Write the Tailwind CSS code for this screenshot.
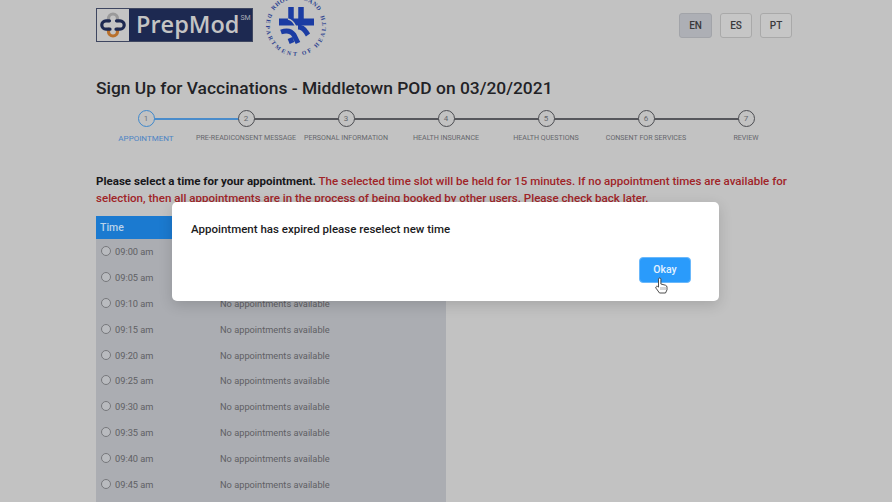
<!DOCTYPE html>
<html lang="en">
<head>
  <meta charset="UTF-8">
  <title>Sign Up for Vaccinations</title>
  <script src="https://cdn.jsdelivr.net/npm/@tailwindcss/browser@4"></script>
</head>
<body class="relative w-[892px] h-[502px] overflow-hidden bg-[#c2c2c2] font-['Roboto',sans-serif] text-[#1c1c1e]">
  <div class="w-[700px] ml-[96px]">
    <!-- Header -->
    <header class="flex items-start justify-between h-[78px]">
      <div class="flex items-start gap-[11px]">
        <div class="flex items-center w-[157px] h-[34px] mt-[8px] bg-[#1d2951] border border-[#3e4660]">
          <div class="flex items-center justify-center w-[32px] h-full bg-[#c4c4c4]">
            <svg width="26" height="26" viewBox="0 0 26 26" fill="none" stroke-width="3.200" stroke-linecap="round" stroke-linejoin="round">
              <path d="M8.500 9V6.500a4.500 4.500 0 0 1 9 0V9" stroke="#9a9a9a"/>
              <path d="M8.500 17v2.500a4.500 4.500 0 0 0 9 0V17" stroke="#b8702c"/>
              <path d="M9.500 8.800H6a4.200 4.200 0 0 0 0 8.400h4M16.500 8.800H20a4.200 4.200 0 0 1 0 8.400h-4" stroke="#1d2951"/>
            </svg>
          </div>
          <span class="ml-[7px] font-['Open_Sans',sans-serif] text-[#c4c4c4] text-[23.500px] leading-none font-semibold">PrepMod</span>
          <span class="self-start mt-[6px] ml-[1px] text-[#a9acb6] text-[7px] leading-none">SM</span>
        </div>
        <svg width="66" height="60" viewBox="0 0 66 60">
          <defs>
            <path id="seal-top" d="M9.900 10.500A27 27 0 0 1 54.100 10.500"/>
            <path id="seal-bottom" d="M4.800 13.300A30 30 0 1 0 59.200 13.300"/>
          </defs>
          <text font-family="Liberation Serif, serif" font-size="6" font-weight="700" fill="#2a3f8f">
            <textPath href="#seal-top" textLength="52" lengthAdjust="spacing">RHODE ISLAND</textPath>
          </text>
          <text font-family="Liberation Serif, serif" font-size="5.800" font-weight="700" fill="#2a3f8f">
            <textPath href="#seal-bottom" textLength="118" lengthAdjust="spacing">DEPARTMENT OF HEALTH</textPath>
          </text>
          <path d="M15 22h35" stroke="#1b3ca3" stroke-width="7"/>
          <path d="M27 7v13M37 7v13" stroke="#1b3ca3" stroke-width="5.500"/>
          <path d="M17 32q9-3 13 3l4 8M26 38l2 5M34 27q5 0 8 5l2 3" stroke="#1b3ca3" stroke-width="5" fill="none"/>
          <path d="M24 19q5 1 8 8" stroke="#c2c2c2" stroke-width="1.500" fill="none"/>
        </svg>
      </div>
      <div class="flex gap-[8px] mt-[13px] mr-[4px] text-[10px] font-medium text-[#3a3a3c]">
        <button class="w-[33px] h-[25px] rounded-[3px] border border-[#a2a4a9] bg-[#adafb5]">EN</button>
        <button class="w-[32px] h-[25px] rounded-[3px] border border-[#a9a9a9] bg-[#c6c6c6]">ES</button>
        <button class="w-[32px] h-[25px] rounded-[3px] border border-[#a9a9a9] bg-[#c6c6c6]">PT</button>
      </div>
    </header>

    <h1 class="text-[17.400px] leading-[20px] font-medium text-[#222226]">Sign Up for Vaccinations - Middletown POD on 03/20/2021</h1>

    <!-- Stepper -->
    <ol class="grid grid-cols-7 mt-[12px] text-[7.100px] leading-[10px] text-[#66676c] text-center whitespace-nowrap">
      <li class="relative flex flex-col items-center text-[#4d84c4]">
        <span class="absolute left-1/2 top-[8px] w-full h-[2px] bg-[#4a8ccb]"></span>
        <span class="relative flex items-center justify-center w-[17px] h-[17px] rounded-full border-[1.500px] border-[#3f88cc] bg-[#c2c2c2] text-[8px] text-[#6f7278]">1</span>
        <span class="mt-[7px] text-[8px]">APPOINTMENT</span>
      </li>
      <li class="relative flex flex-col items-center">
        <span class="absolute left-1/2 top-[8px] w-full h-[2px] bg-[#56575c]"></span>
        <span class="relative flex items-center justify-center w-[17px] h-[17px] rounded-full border-[1.500px] border-[#4c4d52] bg-[#c2c2c2] text-[8px]">2</span>
        <span class="mt-[6px]">PRE-READICONSENT MESSAGE</span>
      </li>
      <li class="relative flex flex-col items-center">
        <span class="absolute left-1/2 top-[8px] w-full h-[2px] bg-[#56575c]"></span>
        <span class="relative flex items-center justify-center w-[17px] h-[17px] rounded-full border-[1.500px] border-[#4c4d52] bg-[#c2c2c2] text-[8px]">3</span>
        <span class="mt-[6px]">PERSONAL INFORMATION</span>
      </li>
      <li class="relative flex flex-col items-center">
        <span class="absolute left-1/2 top-[8px] w-full h-[2px] bg-[#56575c]"></span>
        <span class="relative flex items-center justify-center w-[17px] h-[17px] rounded-full border-[1.500px] border-[#4c4d52] bg-[#c2c2c2] text-[8px]">4</span>
        <span class="mt-[6px]">HEALTH INSURANCE</span>
      </li>
      <li class="relative flex flex-col items-center">
        <span class="absolute left-1/2 top-[8px] w-full h-[2px] bg-[#56575c]"></span>
        <span class="relative flex items-center justify-center w-[17px] h-[17px] rounded-full border-[1.500px] border-[#4c4d52] bg-[#c2c2c2] text-[8px]">5</span>
        <span class="mt-[6px]">HEALTH QUESTIONS</span>
      </li>
      <li class="relative flex flex-col items-center">
        <span class="absolute left-1/2 top-[8px] w-full h-[2px] bg-[#56575c]"></span>
        <span class="relative flex items-center justify-center w-[17px] h-[17px] rounded-full border-[1.500px] border-[#4c4d52] bg-[#c2c2c2] text-[8px]">6</span>
        <span class="mt-[6px]">CONSENT FOR SERVICES</span>
      </li>
      <li class="relative flex flex-col items-center">
        <span class="relative flex items-center justify-center w-[17px] h-[17px] rounded-full border-[1.500px] border-[#4c4d52] bg-[#c2c2c2] text-[8px]">7</span>
        <span class="mt-[6px]">REVIEW</span>
      </li>
    </ol>

    <p class="mt-[29px] text-[11.550px] leading-[17px] font-medium text-[#a02428] whitespace-nowrap"><span class="font-bold text-[#17171a]">Please select a time for your appointment.</span> The selected time slot will be held for 15 minutes. If no appointment times are available for<br>selection, then all appointments are in the process of being booked by other users. Please check back later.</p>

    <!-- Time table -->
    <div class="w-[350px] mt-[9px] bg-[#abadb2] text-[9.250px] text-[#5f6064]">
      <div class="flex items-center h-[23px] pl-[4px] bg-[#1b7ad0] text-[10.500px] font-medium text-[#b9d3ea]">Time</div>
      <div class="flex items-center h-[25.900px] pl-[5px]"><span class="w-[10px] h-[10px] -mt-[2px] rounded-full border border-[#77787c] bg-[#b9bbbf]"></span><span class="ml-[4px] w-[105px]">09:00 am</span></div>
      <div class="flex items-center h-[25.900px] pl-[5px]"><span class="w-[10px] h-[10px] -mt-[2px] rounded-full border border-[#77787c] bg-[#b9bbbf]"></span><span class="ml-[4px] w-[105px]">09:05 am</span></div>
      <div class="flex items-center h-[25.900px] pl-[5px]"><span class="w-[10px] h-[10px] -mt-[2px] rounded-full border border-[#77787c] bg-[#b9bbbf]"></span><span class="ml-[4px] w-[105px]">09:10 am</span><span>No appointments available</span></div>
      <div class="flex items-center h-[25.900px] pl-[5px]"><span class="w-[10px] h-[10px] -mt-[2px] rounded-full border border-[#77787c] bg-[#b9bbbf]"></span><span class="ml-[4px] w-[105px]">09:15 am</span><span>No appointments available</span></div>
      <div class="flex items-center h-[25.900px] pl-[5px]"><span class="w-[10px] h-[10px] -mt-[2px] rounded-full border border-[#77787c] bg-[#b9bbbf]"></span><span class="ml-[4px] w-[105px]">09:20 am</span><span>No appointments available</span></div>
      <div class="flex items-center h-[25.900px] pl-[5px]"><span class="w-[10px] h-[10px] -mt-[2px] rounded-full border border-[#77787c] bg-[#b9bbbf]"></span><span class="ml-[4px] w-[105px]">09:25 am</span><span>No appointments available</span></div>
      <div class="flex items-center h-[25.900px] pl-[5px]"><span class="w-[10px] h-[10px] -mt-[2px] rounded-full border border-[#77787c] bg-[#b9bbbf]"></span><span class="ml-[4px] w-[105px]">09:30 am</span><span>No appointments available</span></div>
      <div class="flex items-center h-[25.900px] pl-[5px]"><span class="w-[10px] h-[10px] -mt-[2px] rounded-full border border-[#77787c] bg-[#b9bbbf]"></span><span class="ml-[4px] w-[105px]">09:35 am</span><span>No appointments available</span></div>
      <div class="flex items-center h-[25.900px] pl-[5px]"><span class="w-[10px] h-[10px] -mt-[2px] rounded-full border border-[#77787c] bg-[#b9bbbf]"></span><span class="ml-[4px] w-[105px]">09:40 am</span><span>No appointments available</span></div>
      <div class="flex items-center h-[25.900px] pl-[5px]"><span class="w-[10px] h-[10px] -mt-[2px] rounded-full border border-[#77787c] bg-[#b9bbbf]"></span><span class="ml-[4px] w-[105px]">09:45 am</span><span>No appointments available</span></div>
      <div class="h-[20px]"></div>
    </div>
  </div>

  <!-- Modal -->
  <div class="absolute left-[172px] top-[202px] flex flex-col w-[547px] h-[99px] rounded-[5px] bg-white shadow-[0_4px_14px_rgba(0,0,0,0.15)]">
    <p class="ml-[19px] mt-[20px] text-[11.500px] leading-[14px] font-medium text-[#1b1b1d]">Appointment has expired please reselect new time</p>
    <button class="self-end mt-[21px] mr-[28px] w-[52px] h-[26px] rounded-[4px] border border-[#6ab8fb] bg-[#2a9bfb] text-[10.500px] font-medium text-[#e4f2ff]">Okay</button>
  </div>
  <!-- Cursor -->
  <svg class="absolute left-[655px] top-[277px]" width="13" height="17" viewBox="0 0 13 17">
    <path d="M3.500 9V2.200a1.200 1.200 0 0 1 2.400 0V7l4.500 1.200q1.600.5 1.600 2v2.600L10.500 16H4.500L1 11.200q-.7-1.400.5-1.900.8-.3 2 .8z" fill="#fff" stroke="#3a3a3a" stroke-width=".9" stroke-linejoin="round"/>
    <path d="M6 10v3M8 10v3M10 10v3" stroke="#777" stroke-width=".6"/>
  </svg>
</body>
</html>
